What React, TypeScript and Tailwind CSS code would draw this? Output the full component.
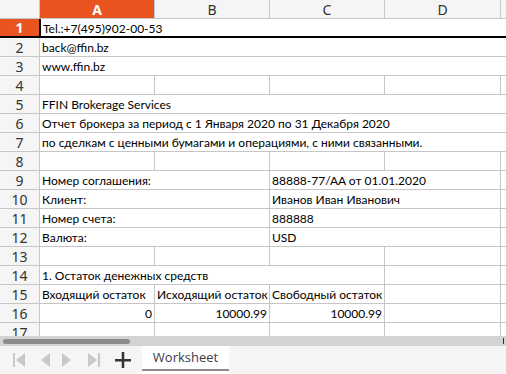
import React from 'react';

// column widths, right border included
const COLS = [115, 115, 115, 116];

type Cell = { text?: string; span?: number; right?: boolean };

const rows: Cell[][] = [
  [{ text: 'Tel.:+7(495)902-00-53', span: 5 }],
  [{ text: 'back@ffin.bz', span: 5 }],
  [{ text: 'www.ffin.bz', span: 5 }],
  [{}, {}, {}, {}, {}],
  [{ text: 'FFIN Brokerage Services', span: 5 }],
  [{ text: 'Отчет брокера за период с 1 Января 2020 по 31 Декабря 2020', span: 5 }],
  [{ text: 'по сделкам с ценными бумагами и операциями, с ними связанными.', span: 5 }],
  [{}, {}, {}, {}, {}],
  [{ text: 'Номер соглашения:', span: 2 }, { text: '88888-77/AA от 01.01.2020', span: 2 }, {}],
  [{ text: 'Клиент:', span: 2 }, { text: 'Иванов Иван Иванович', span: 2 }, {}],
  [{ text: 'Номер счета:', span: 2 }, { text: '888888', span: 2 }, {}],
  [{ text: 'Валюта:', span: 2 }, { text: 'USD', span: 2 }, {}],
  [{}, {}, {}, {}, {}],
  [{ text: '1. Остаток денежных средств', span: 3 }, {}, {}],
  [{ text: 'Входящий остаток' }, { text: 'Исходящий остаток' }, { text: 'Свободный остаток' }, {}, {}],
  [{ text: '0', right: true }, { text: '10000.99', right: true }, { text: '10000.99', right: true }, {}, {}],
  [{}, {}, {}, {}, {}],
];

const widthOf = (start: number, span: number) => {
  let w = 0;
  for (let i = start; i < start + span; i++) w += COLS[i] ?? 0;
  return w;
};

const Row: React.FC<{ n: number; cells: Cell[] }> = ({ n, cells }) => {
  const first = n === 1;
  let col = 0;
  return (
    <div
      className={
        'flex shrink-0 ' +
        (first ? 'border-t border-b-2 border-black h-[20px] -mt-px' : 'h-[19px] border-b border-[#c6c6c6]')
      }
    >
      <div
        className={
          'w-[40px] shrink-0 flex items-center justify-center border-r text-[14px] font-[\'Noto_Sans\',sans-serif] ' +
          (first
            ? 'bg-[#e95420] text-white font-bold border-[#c6c6c6]'
            : 'bg-[#f5f5f5] text-[#333] border-[#c6c6c6]')
        }
      >
        {n}
      </div>
      {cells.map((c, i) => {
        const span = c.span ?? 1;
        const start = col;
        col += span;
        const last = start + span >= COLS.length + 1;
        const w = last ? undefined : widthOf(start, span);
        return (
          <div
            key={i}
            style={w ? { width: w } : undefined}
            className={
              'flex items-center pt-[2px] px-[2px] text-[12px] text-black whitespace-nowrap overflow-visible ' +
              (last ? 'flex-1 ' : 'shrink-0 border-r border-[#c6c6c6] ') +
              (c.right ? 'justify-end ' : '') +
              (first && i === 0 ? 'border-l-2 border-l-black -ml-px' : '')
            }
          >
            {c.text}
          </div>
        );
      })}
    </div>
  );
};

export default function App() {
  return (
    <div className="w-[506px] h-[374px] overflow-hidden bg-white flex flex-col font-['Lato',sans-serif]">
      {/* column header */}
      <div className="flex h-[19px] shrink-0 border-b border-[#c6c6c6] bg-[#f5f5f5] text-[14px] text-[#333] font-['Noto_Sans',sans-serif]">
        <div className="w-[40px] shrink-0 border-r border-[#c6c6c6]" />
        <div className="w-[115px] shrink-0 flex items-center justify-center bg-[#e95420] text-white font-bold border-r border-[#c6c6c6]">
          A
        </div>
        <div className="w-[115px] shrink-0 flex items-center justify-center border-r border-[#c6c6c6]">B</div>
        <div className="w-[115px] shrink-0 flex items-center justify-center border-r border-[#c6c6c6]">C</div>
        <div className="w-[116px] shrink-0 flex items-center justify-center border-r border-[#c6c6c6]">D</div>
        <div className="flex-1" />
      </div>

      <div className="flex-1 overflow-hidden flex flex-col">
        {rows.map((cells, i) => (
          <Row key={i} n={i + 1} cells={cells} />
        ))}
      </div>

      {/* horizontal scrollbar */}
      <div className="h-[10px] shrink-0 bg-[#d3d3d3] flex items-center px-[3px] relative">
        <div className="h-[5px] w-[127px] rounded-full bg-[#8c8c8c]" />
        <div className="absolute right-[2px] top-[2px] h-[6px] w-px bg-[#333]" />
      </div>

      {/* sheet tabs */}
      <div className="h-[28px] shrink-0 bg-[#f5f5f5] flex items-center pl-[13px]">
        <svg width="13" height="16" viewBox="0 0 13 16" className="mr-[14px]">
          <rect x="0" y="1" width="2" height="14" fill="#c8c8c8" />
          <path d="M12 1 L3 8 L12 15 Z" fill="#c8c8c8" />
        </svg>
        <svg width="10" height="16" viewBox="0 0 10 16" className="mr-[12px]">
          <path d="M10 1 L1 8 L10 15 Z" fill="#c8c8c8" />
        </svg>
        <svg width="10" height="16" viewBox="0 0 10 16" className="mr-[15px]">
          <path d="M0 1 L9 8 L0 15 Z" fill="#c8c8c8" />
        </svg>
        <svg width="13" height="16" viewBox="0 0 13 16" className="mr-[15px]">
          <path d="M1 1 L10 8 L1 15 Z" fill="#c8c8c8" />
          <rect x="11" y="1" width="2" height="14" fill="#c8c8c8" />
        </svg>
        <svg width="16" height="16" viewBox="0 0 16 16" className="mr-[11px]">
          <rect x="0" y="7" width="16" height="2.5" fill="#333" />
          <rect x="6.75" y="0" width="2.5" height="16" fill="#333" />
        </svg>
        <div className="h-full w-[87px] bg-white flex flex-col">
          <div className="flex-1 flex items-center justify-center text-[13px] text-[#3c3c4c] font-['Open_Sans',sans-serif]">
            Worksheet
          </div>
          <div className="h-[2px] bg-[#8a8a8a] mb-[3px]" />
        </div>
      </div>
    </div>
  );
}
